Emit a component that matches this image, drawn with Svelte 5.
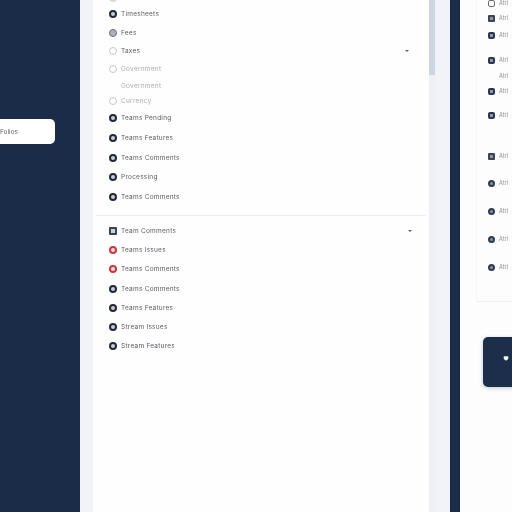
<script>
  const first = [
    { t: '', k: 'ghost', m: -16 },
    { t: 'Timesheets', k: 'dark', m: 2 },
    { t: 'Fees', k: 'mid', m: 5 },
    { t: 'Taxes', k: 'ring', m: 4, chev: true },
    { t: 'Government', k: 'ring', m: 4, faint: true },
    { t: 'Government', k: 'none', m: 3, faint: true },
    { t: 'Currency', k: 'ring', m: 1, faint: true },
    { t: 'Teams Pending', k: 'dark', m: 3 },
    { t: 'Teams Features', k: 'dark', m: 6 },
    { t: 'Teams Comments', k: 'dark', m: 6 },
    { t: 'Processing', k: 'dark', m: 5 },
    { t: 'Teams Comments', k: 'dark', m: 6 }
  ];
  const second = [
    { t: 'Team Comments', k: 'square', m: 0, chev: true },
    { t: 'Teams Issues', k: 'red', m: 5 },
    { t: 'Teams Comments', k: 'red', m: 5 },
    { t: 'Teams Comments', k: 'dark', m: 6 },
    { t: 'Teams Features', k: 'dark', m: 5 },
    { t: 'Stream Issues', k: 'dark', m: 5 },
    { t: 'Stream Features', k: 'dark', m: 5 }
  ];
  const rail = [
    { k: 'outline', m: 0 },
    { k: 'glyph', m: 7 },
    { k: 'box', m: 9 },
    { k: 'box', m: 17 },
    { k: 'none', m: 8 },
    { k: 'box', m: 7 },
    { k: 'box', m: 16 },
    { k: 'glyph', m: 33 },
    { k: 'disc', m: 19 },
    { k: 'disc', m: 20 },
    { k: 'disc', m: 20 },
    { k: 'disc', m: 20 }
  ];
</script>

<div class="page">
  <aside class="nav">
    <div class="pill"><span>Folios</span></div>
  </aside>

  <main class="panel">
    <section class="group first">
      {#each first as r}
        <div class="row" style="margin-top:{r.m}px">
          <span class="ico {r.k}"></span>
          <span class="label" class:faint={r.faint}>{r.t}</span>
          {#if r.chev}<span class="chev"></span>{/if}
        </div>
      {/each}
    </section>
    <section class="group second">
      {#each second as r}
        <div class="row" style="margin-top:{r.m}px">
          <span class="ico {r.k}"></span>
          <span class="label">{r.t}</span>
          {#if r.chev}<span class="chev"></span>{/if}
        </div>
      {/each}
    </section>
  </main>

  <div class="scroll"><div class="thumb"></div></div>
  <div class="band"></div>
  <div class="spacer"></div>

  <aside class="side">
    <div class="railwrap">
      {#each rail as r}
        <div class="railrow" style="margin-top:{r.m}px">
          <span class="ico small {r.k}"></span>
          <span class="rlabel">Atrl</span>
        </div>
      {/each}
    </div>
    <div class="card">
      <svg viewBox="0 0 8 8" width="6" height="7"><path d="M1 1h6v3.5L4 7 1 4.500z" fill="#f4f5f7" /></svg>
    </div>
  </aside>
</div>

<style>
  :global(body) { margin: 0; background: #f1f3f8; }
  .page {
    display: flex;
    width: 512px;
    height: 512px;
    overflow: hidden;
    font-family: Inter, "Liberation Sans", sans-serif;
    background: #f1f3f8;
  }
  .nav {
    width: 80px;
    flex: none;
    background: #1a2c47;
    margin-right: 13px;
    padding-top: 119px;
    box-sizing: border-box;
  }
  .pill {
    width: 55px;
    height: 25px;
    background: #fff;
    border-radius: 0 5px 5px 0;
    display: flex;
    align-items: center;
    overflow: hidden;
    font-size: 6.5px;
    color: #666;
  }
  .pill span { margin-left: 0; white-space: nowrap; filter: blur(0.25px); }
  .panel {
    width: 336px;
    flex: none;
    background: #fefefe;
    box-sizing: border-box;
    padding-left: 3px;
  }
  .group { padding-left: 13px; padding-right: 17px; }
  .first { height: 216px; padding-top: 7px; box-sizing: border-box; border-bottom: 1px solid #eceef1; margin-right: 3px; }
  .second { padding-top: 8px; }
  .row {
    height: 14px;
    display: flex;
    align-items: center;
    position: relative;
  }
  .label {
    margin-left: 4px;
    font-size: 6.5px;
    letter-spacing: 0.25px;
    color: #5a5d64;
    white-space: nowrap;
    filter: blur(0.25px);
  }
  .label.faint { color: #a9acb2; }
  .ico {
    width: 8px;
    height: 8px;
    box-sizing: border-box;
    border-radius: 50%;
    flex: none;
  }
  .dark { background: #c9ccd2; border: 2.500px solid #23283a; }
  .mid { background: #aeb1b9; border: 1.500px solid #6b7080; }
  .ring { background: #fff; border: 1px solid #c4c7cd; }
  .ghost { background: #d5d7db; }
  .none { background: transparent; }
  .square { background: #cfd2d8; border: 2px solid #3a4356; border-radius: 1px; }
  .red { background: #f2dede; border: 2.500px solid #c9393c; }
  .chev {
    position: absolute;
    right: 0;
    width: 0;
    height: 0;
    border-left: 2px solid transparent;
    border-right: 2px solid transparent;
    border-top: 2.500px solid #5a5f6a;
  }
  .scroll { width: 7px; flex: none; background: #eef0f5; }
  .thumb { width: 6px; height: 75px; background: #cfd5e0; }
  .band { width: 14px; flex: none; }
  .spacer { width: 10px; flex: none; background: #1a2c47; }
  .side {
    flex: 1;
    background: #fdfdfe;
    position: relative;
    padding-left: 17px;
    box-sizing: border-box;
  }
  .railwrap {
    height: 303px;
    border-bottom: 1px solid #eff0f3;
    border-left: 1px solid #f5f6f8;
    box-sizing: border-box;
    padding-left: 11px;
    margin-left: -1px;
  }
  .railrow {
    height: 8px;
    display: flex;
    align-items: center;
    gap: 4px;
  }
  .railrow:first-child { margin-top: -1px !important; }
  .small { width: 7px; height: 7px; }
  .outline { background: #fff; border: 1px solid #666b75; border-radius: 2px; }
  .glyph { background: #8d93a0; border: 2px solid #3b4354; border-radius: 1px; }
  .box { background: #8e96a8; border: 2px solid #2b3650; border-radius: 2px; }
  .disc { background: #8a93a3; border: 2px solid #2f3a4f; border-radius: 50%; }
  .rlabel { font-size: 5.500px; color: #8b8f97; filter: blur(0.25px); }
  .card {
    position: absolute;
    left: 23px;
    top: 337px;
    width: 40px;
    height: 50px;
    background: #1c2e49;
    border-radius: 5px;
    box-shadow: 0 1px 4px rgba(30, 40, 60, 0.25);
    display: flex;
    align-items: center;
    padding-left: 20px;
    padding-bottom: 8px;
    box-sizing: border-box;
  }
</style>
